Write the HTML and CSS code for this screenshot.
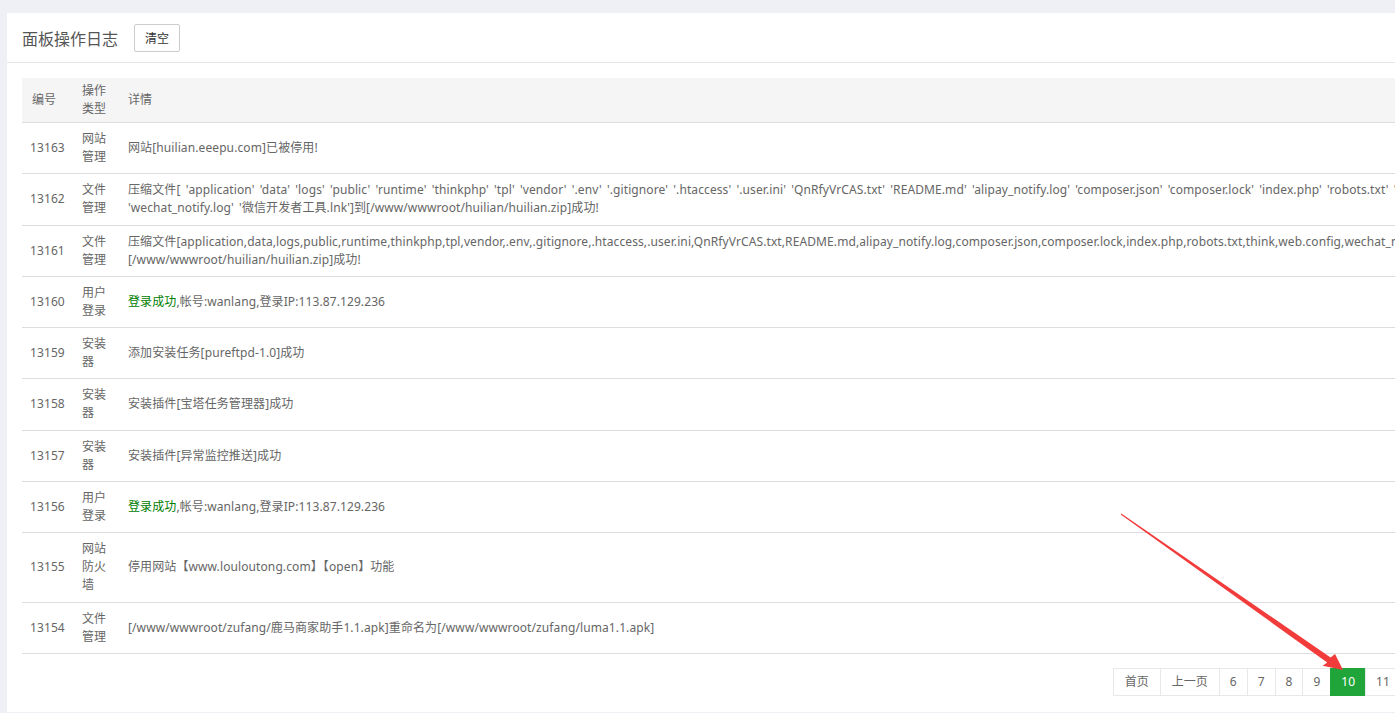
FILE: index.html
```html
<!DOCTYPE html>
<html>
<head>
  <meta charset="utf-8">
  <link rel="stylesheet" href="styles.css">
</head>
<body>
<div class="panel">
  <div class="panel-head">
    <span class="panel-title">面板操作日志</span>
    <button class="btn">清空</button>
  </div>
  <div class="panel-body">
    <table class="log-table">
      <colgroup>
        <col class="c-id">
        <col class="c-type">
        <col>
      </colgroup>
      <thead>
        <tr><th>编号</th><th>操作类型</th><th>详情</th></tr>
      </thead>
      <tbody>
        <tr><td>13163</td><td>网站管理</td><td>网站[huilian.eeepu.com]已被停用!</td></tr>
        <tr><td>13162</td><td>文件管理</td><td>压缩文件[ 'application' 'data' 'logs' 'public' 'runtime' 'thinkphp' 'tpl' 'vendor' '.env' '.gitignore' '.htaccess' '.user.ini' 'QnRfyVrCAS.txt' 'README.md' 'alipay_notify.log' 'composer.json' 'composer.lock' 'index.php' 'robots.txt' 'think' 'web.config' 'wechat_notify.log' '微信开发者工具.lnk']到[/www/wwwroot/huilian/huilian.zip]成功!</td></tr>
        <tr><td>13161</td><td>文件管理</td><td>压缩文件[application,data,logs,public,runtime,thinkphp,tpl,vendor,.env,.gitignore,.htaccess,.user.ini,QnRfyVrCAS.txt,README.md,alipay_notify.log,composer.json,composer.lock,index.php,robots.txt,think,web.config,wechat_notify.log,微信开发者工具.lnk]到[/www/wwwroot/huilian/huilian.zip]成功!</td></tr>
        <tr><td>13160</td><td>用户登录</td><td><span class="ok">登录成功</span>,帐号:wanlang,登录IP:113.87.129.236</td></tr>
        <tr><td>13159</td><td>安装器</td><td>添加安装任务[pureftpd-1.0]成功</td></tr>
        <tr><td>13158</td><td>安装器</td><td>安装插件[宝塔任务管理器]成功</td></tr>
        <tr><td>13157</td><td>安装器</td><td>安装插件[异常监控推送]成功</td></tr>
        <tr><td>13156</td><td>用户登录</td><td><span class="ok">登录成功</span>,帐号:wanlang,登录IP:113.87.129.236</td></tr>
        <tr><td>13155</td><td>网站防火墙</td><td>停用网站【www.louloutong.com】【open】功能</td></tr>
        <tr><td>13154</td><td>文件管理</td><td>[/www/wwwroot/zufang/鹿马商家助手1.1.apk]重命名为[/www/wwwroot/zufang/luma1.1.apk]</td></tr>
      </tbody>
    </table>
    <div class="page">
      <a class="txt">首页</a><a class="txt">上一页</a><a>6</a><a>7</a><a>8</a><a>9</a><span class="current">10</span><a>11</a><a>12</a><a>13</a><a>14</a><a class="txt">下一页</a><a class="txt">尾页</a>
    </div>
  </div>
</div>

<svg class="mark" width="1395" height="713" viewBox="0 0 1395 713">
  <polygon fill="#f23b3b" points="1120.7,514.4 1121.3,513.6 1330.6,657.4 1335,654 1343,670 1322.7,665.7 1327.2,662.4"/>
</svg>
</body>
</html>
```

FILE: styles.css
```css
html, body {
  overflow: hidden;
}
body {
  margin: 0;
  background: #eff0f5;
  font-family: "Noto Sans", "Noto Sans CJK SC", sans-serif;
  font-size: 12px;
  color: #666;
}

.panel {
  width: 1619px;
  margin: 13px 0 0 7px;
  background: #fff;
}
.panel-head {
  height: 49px;
  display: flex;
  align-items: center;
  padding: 0 15px;
  border-bottom: 1px solid #e6e6e6;
}
.panel-title {
  font-size: 16px;
  color: #555;
  margin-right: 16px;
}
.btn {
  height: 28px;
  padding: 0 10px;
  font: inherit;
  color: #333;
  background: #fff;
  border: 1px solid #ccc;
  border-radius: 2px;
}

.panel-body {
  padding: 15px 15px 16px;
}

.log-table {
  width: 100%;
  table-layout: fixed;
  border-collapse: collapse;
  line-height: 18px;
  letter-spacing: 0.1px;
  word-spacing: 2px;
}
.log-table col.c-id { width: 50px; }
.log-table col.c-type { width: 46px; }
.log-table th {
  background: #f5f5f5;
  font-weight: normal;
  text-align: left;
  padding: 4px 10px;
  border-bottom: 1px solid #ddd;
}
.log-table td {
  padding: 7px 10px 7.3px;
  border-bottom: 1px solid #ddd;
  vertical-align: middle;
}
.log-table td:first-child {
  padding-left: 8px;
  padding-right: 0;
}
.log-table .ok {
  color: green;
}

.page {
  display: flex;
  justify-content: flex-end;
  margin-top: 14px;
}
.page a,
.page span {
  height: 26px;
  line-height: 26px;
  padding: 0 10px;
  border: 1px solid #e8e8e8;
  margin-left: -1px;
  color: #666;
}
.page a.txt {
  padding: 0 11px;
}
.page .current {
  background: #20a53a;
  border-color: #20a53a;
  color: #fff;
}

.mark {
  position: absolute;
  left: 0;
  top: 0;
  pointer-events: none;
}
```
